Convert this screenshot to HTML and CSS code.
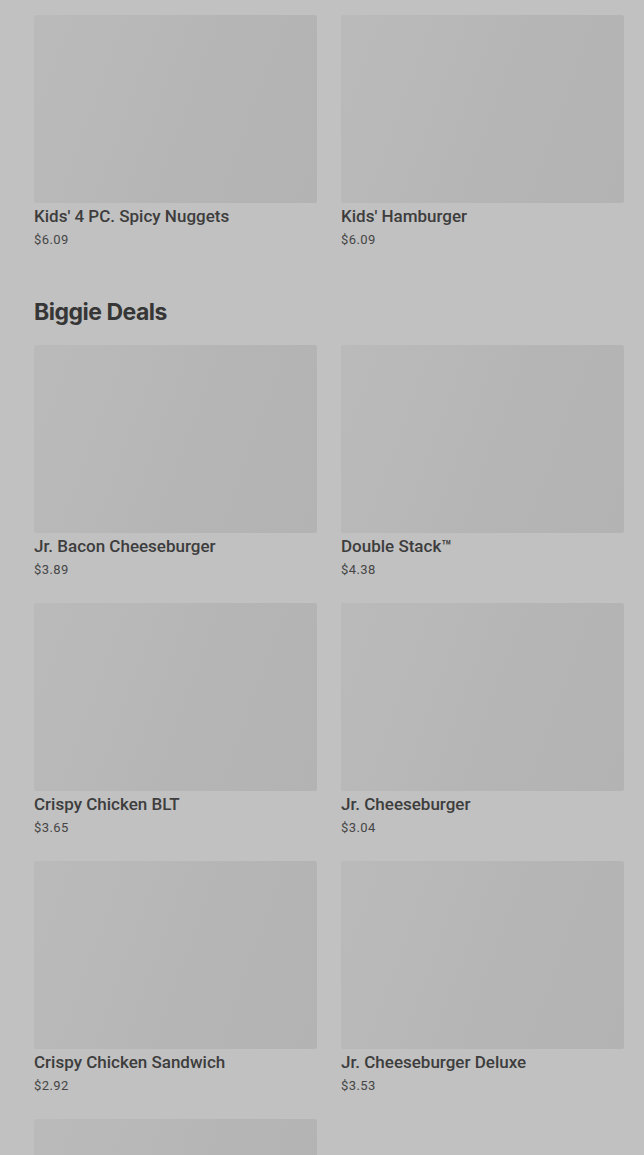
FILE: index.html
```html
<!DOCTYPE html>
<html lang="en">
<head>
<meta charset="utf-8">
<title>Menu</title>
<link rel="stylesheet" href="styles.css">
</head>
<body>
<main class="page">
  <section class="section first">
    <div class="grid">
      <div class="card"><div class="thumb"></div><div class="name">Kids' 4 PC. Spicy Nuggets</div><div class="price">$6.09</div></div>
      <div class="card"><div class="thumb"></div><div class="name">Kids' Hamburger</div><div class="price">$6.09</div></div>
    </div>
  </section>
  <section class="section">
    <h2 class="heading">Biggie Deals</h2>
    <div class="grid">
      <div class="card"><div class="thumb"></div><div class="name">Jr. Bacon Cheeseburger</div><div class="price">$3.89</div></div>
      <div class="card"><div class="thumb"></div><div class="name">Double Stack™</div><div class="price">$4.38</div></div>
      <div class="card"><div class="thumb"></div><div class="name">Crispy Chicken BLT</div><div class="price">$3.65</div></div>
      <div class="card"><div class="thumb"></div><div class="name">Jr. Cheeseburger</div><div class="price">$3.04</div></div>
      <div class="card"><div class="thumb"></div><div class="name">Crispy Chicken Sandwich</div><div class="price">$2.92</div></div>
      <div class="card"><div class="thumb"></div><div class="name">Jr. Cheeseburger Deluxe</div><div class="price">$3.53</div></div>
      <div class="card"><div class="thumb"></div></div>
    </div>
  </section>
</main>
</body>
</html>
```

FILE: styles.css
```css
html, body {
  margin: 0;
  padding: 0;
  background: #c1c1c1;
  height: 1155px;
  overflow: hidden;
}
body {
  font-family: Roboto, "Liberation Sans", sans-serif;
  color: #393939;
}
.page {
  padding: 15px 20px 0 34px;
}
.section.first {
  margin-bottom: 49px;
}
.heading {
  margin: 0 0 19px 0;
  font-family: Inter, "Liberation Sans", sans-serif;
  font-weight: 700;
  font-size: 23px;
  line-height: 28px;
  letter-spacing: -0.5px;
  color: #363636;
}
.grid {
  display: grid;
  grid-template-columns: 283px 283px;
  column-gap: 24px;
  row-gap: 24px;
}
.card {
  display: flex;
  flex-direction: column;
}
.thumb {
  height: 188px;
  border-radius: 2px;
  background: linear-gradient(110deg, #bababa 0%, #b8b8b8 30%, #b5b5b5 55%, #b3b3b3 100%);
}
.name {
  margin-top: 3px;
  font-size: 17px;
  line-height: 21px;
  font-weight: 500;
  color: #3d3d3d;
}
.price {
  margin-top: 4px;
  font-size: 13px;
  line-height: 18px;
  letter-spacing: 0.4px;
  color: #464646;
}
```
